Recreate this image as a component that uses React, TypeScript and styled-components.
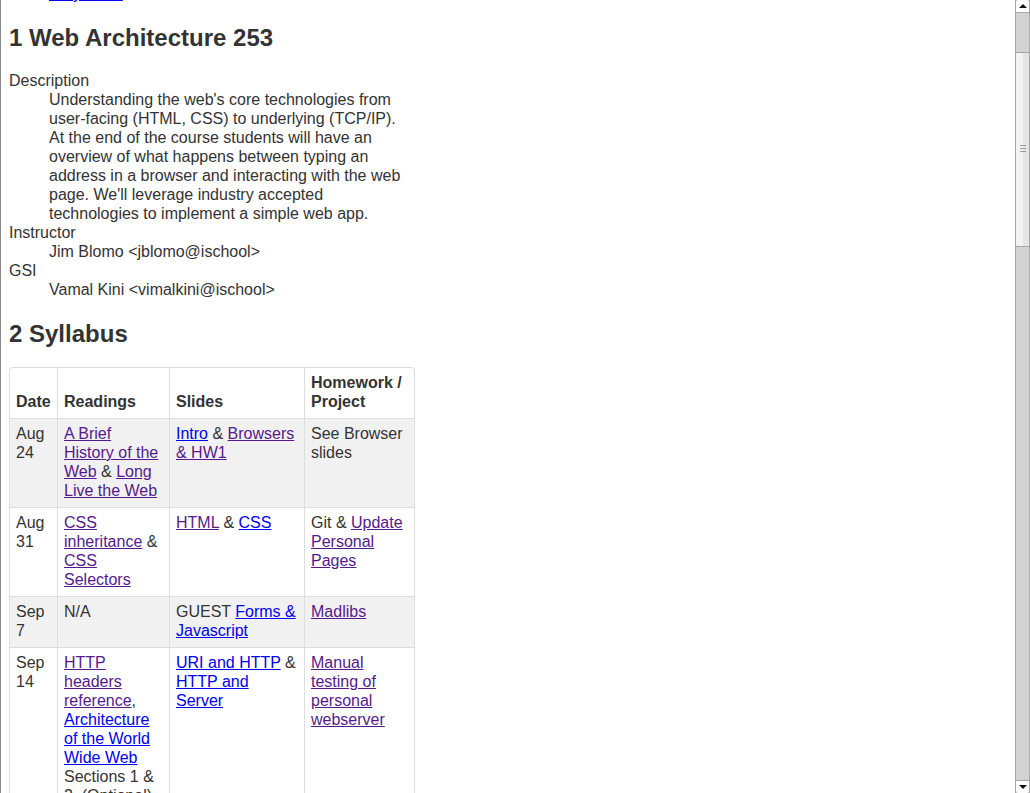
import React, { useLayoutEffect, useRef } from "react";
import styled, { createGlobalStyle } from "styled-components";

const GlobalStyle = createGlobalStyle`
  html, body {
    margin: 0;
    padding: 0;
    height: 100%;
    overflow: hidden;
    background: #fff;
  }
  body {
    font-family: "Liberation Sans", Arial, sans-serif;
    font-size: 16px;
    line-height: 19px;
    color: #333;
  }
`;

const Window = styled.div`
  display: flex;
  width: 1030px;
  height: 793px;
`;

const Viewport = styled.div`
  flex: 1;
  min-width: 0;
  height: 100%;
  overflow: hidden;
  border-left: 1px solid #8a8a8a;
  background: #fff;
`;

const Page = styled.div`
  width: 406px;
  padding: 8px 8px 40px;
`;

const Title = styled.h1`
  font-size: 32px;
  line-height: 38px;
  font-weight: bold;
  text-align: center;
  margin: 21px 0;
  color: #333;
`;

const SectionTitle = styled.h2`
  font-size: 24px;
  line-height: 29px;
  font-weight: bold;
  margin: 20px 0 19px;
  color: #333;
`;

const TocList = styled.ul`
  margin: 16px 0;
  padding-left: 40px;
  list-style: disc;
`;

const Link = styled.a<{ $visited?: boolean }>`
  color: ${(p) => (p.$visited ? "#551a8b" : "#0000ee")};
  text-decoration: underline;
  cursor: pointer;
`;

const InfoList = styled.dl`
  margin: 16px 0;
  max-width: 400px;
`;

const Term = styled.dt`
  margin: 0;
`;

const Detail = styled.dd`
  margin: 0 0 0 40px;
`;

const Table = styled.table`
  width: 406px;
  table-layout: fixed;
  border-collapse: separate;
  border-spacing: 0;
  border: 1px solid #dddddd;
  border-left: 0;
  border-radius: 4px;
`;

const HeadCell = styled.th<{ $w?: number; $first?: boolean; $last?: boolean }>`
  box-sizing: border-box;
  ${(p) => (p.$w ? `width: ${p.$w}px;` : "")}
  padding: 5px 6px 7px;
  text-align: left;
  vertical-align: bottom;
  font-weight: bold;
  border-left: 1px solid #dddddd;
  background: #fff;
  ${(p) => (p.$first ? "border-top-left-radius: 4px;" : "")}
  ${(p) => (p.$last ? "border-top-right-radius: 4px;" : "")}
`;

const Row = styled.tr<{ $striped?: boolean }>`
  background: ${(p) => (p.$striped ? "#f1f1f1" : "#ffffff")};
`;

const Cell = styled.td`
  box-sizing: border-box;
  padding: 5px 6px 7px;
  text-align: left;
  vertical-align: top;
  border-left: 1px solid #dddddd;
  border-top: 1px solid #dddddd;
`;

const Scrollbar = styled.div`
  width: 15px;
  height: 100%;
  box-sizing: border-box;
  display: flex;
  flex-direction: column;
  border-left: 1px solid #a6a6a6;
  border-right: 1px solid #a6a6a6;
  background: #d3d3d3;
`;

const ArrowButton = styled.div<{ $down?: boolean }>`
  height: 13px;
  flex: none;
  box-sizing: border-box;
  display: flex;
  align-items: center;
  justify-content: center;
  background: #fff;
  ${(p) =>
    p.$down
      ? "border-top: 1px solid #a6a6a6; border-radius: 0 0 3px 3px;"
      : "border-bottom: 1px solid #a6a6a6; border-radius: 3px 3px 0 0;"}
`;

const Arrow = styled.span<{ $down?: boolean }>`
  width: 0;
  height: 0;
  border-left: 4px solid transparent;
  border-right: 4px solid transparent;
  ${(p) => (p.$down ? "border-top: 4px solid #111;" : "border-bottom: 4px solid #111;")}
`;

const Track = styled.div`
  flex: 1;
  display: flex;
  flex-direction: column;
  padding-top: 39px;
`;

const Thumb = styled.div`
  height: 195px;
  box-sizing: border-box;
  border-top: 1px solid #a6a6a6;
  border-bottom: 1px solid #a6a6a6;
  background: linear-gradient(to right, #f3f3f3 0, #f3f3f3 55%, #e5e5e5 55%, #e5e5e5 100%);
  display: flex;
  align-items: center;
  justify-content: center;
`;

const Grip = styled.div`
  width: 6px;
  display: flex;
  flex-direction: column;
  gap: 2px;
  margin-top: -2px;
`;

const GripLine = styled.span`
  display: block;
  height: 1px;
  background: #9a9a9a;
`;

type Piece = string | { t: string; v?: boolean };

const Rich: React.FC<{ parts: Piece[] }> = ({ parts }) => (
  <>
    {parts.map((p, i) =>
      typeof p === "string" ? (
        <React.Fragment key={i}>{p}</React.Fragment>
      ) : (
        <Link key={i} href="#" $visited={p.v}>
          {p.t}
        </Link>
      )
    )}
  </>
);

const rows: { date: string; readings: Piece[]; slides: Piece[]; hw: Piece[] }[] = [
  {
    date: "Aug 24",
    readings: [{ t: "A Brief History of the Web", v: true }, " & ", { t: "Long Live the Web", v: true }],
    slides: [{ t: "Intro" }, " & ", { t: "Browsers & HW1", v: true }],
    hw: ["See Browser slides"],
  },
  {
    date: "Aug 31",
    readings: [{ t: "CSS inheritance", v: true }, " & ", { t: "CSS Selectors", v: true }],
    slides: [{ t: "HTML", v: true }, " & ", { t: "CSS" }],
    hw: ["Git & ", { t: "Update Personal Pages", v: true }],
  },
  {
    date: "Sep 7",
    readings: ["N/A"],
    slides: ["GUEST ", { t: "Forms & Javascript" }],
    hw: [{ t: "Madlibs", v: true }],
  },
  {
    date: "Sep 14",
    readings: [
      { t: "HTTP headers reference", v: true },
      ", ",
      { t: "Architecture of the World Wide Web" },
      " Sections 1 & 2. (Optional) ",
      { t: "RFC 2616" },
    ],
    slides: [{ t: "URI and HTTP" }, " & ", { t: "HTTP and Server" }],
    hw: [{ t: "Manual testing of personal webserver", v: true }],
  },
  {
    date: "Sep 21",
    readings: [{ t: "HTTP Made Really Easy" }],
    slides: [{ t: "Web Servers" }],
    hw: [{ t: "Web server project" }],
  },
];

export default function App() {
  const viewportRef = useRef<HTMLDivElement>(null);
  const anchorRef = useRef<HTMLHeadingElement>(null);

  useLayoutEffect(() => {
    const vp = viewportRef.current;
    const anchor = anchorRef.current;
    if (!vp || !anchor) return;
    const delta = anchor.getBoundingClientRect().top - vp.getBoundingClientRect().top;
    vp.scrollTop = vp.scrollTop + delta - 23;
  }, []);

  return (
    <>
      <GlobalStyle />
      <Window>
        <Viewport ref={viewportRef}>
          <Page>
            <Title>Web Architecture</Title>
            <SectionTitle>Table of Contents</SectionTitle>
            <TocList>
              <li>
                <Link href="#">1 Web Architecture 253</Link>
              </li>
              <li>
                <Link href="#">2 Syllabus</Link>
              </li>
            </TocList>

            <SectionTitle ref={anchorRef}>1 Web Architecture 253</SectionTitle>
            <InfoList>
              <Term>Description</Term>
              <Detail>
                Understanding the web's core technologies from user-facing (HTML, CSS) to underlying
                (TCP/IP). At the end of the course students will have an overview of what happens
                between typing an address in a browser and interacting with the web page. We'll
                leverage industry accepted technologies to implement a simple web app.
              </Detail>
              <Term>Instructor</Term>
              <Detail>Jim Blomo &lt;jblomo@ischool&gt;</Detail>
              <Term>GSI</Term>
              <Detail>Vamal Kini &lt;vimalkini@ischool&gt;</Detail>
            </InfoList>

            <SectionTitle>2 Syllabus</SectionTitle>
            <Table>
              <thead>
                <tr>
                  <HeadCell $w={48} $first>
                    Date
                  </HeadCell>
                  <HeadCell $w={112}>Readings</HeadCell>
                  <HeadCell $w={135}>Slides</HeadCell>
                  <HeadCell $last>Homework / Project</HeadCell>
                </tr>
              </thead>
              <tbody>
                {rows.map((r, i) => (
                  <Row key={r.date} $striped={i % 2 === 0}>
                    <Cell>{r.date}</Cell>
                    <Cell>
                      <Rich parts={r.readings} />
                    </Cell>
                    <Cell>
                      <Rich parts={r.slides} />
                    </Cell>
                    <Cell>
                      <Rich parts={r.hw} />
                    </Cell>
                  </Row>
                ))}
              </tbody>
            </Table>
          </Page>
        </Viewport>
        <Scrollbar>
          <ArrowButton>
            <Arrow />
          </ArrowButton>
          <Track>
            <Thumb>
              <Grip>
                <GripLine />
                <GripLine />
                <GripLine />
              </Grip>
            </Thumb>
          </Track>
          <ArrowButton $down>
            <Arrow $down />
          </ArrowButton>
        </Scrollbar>
      </Window>
    </>
  );
}
